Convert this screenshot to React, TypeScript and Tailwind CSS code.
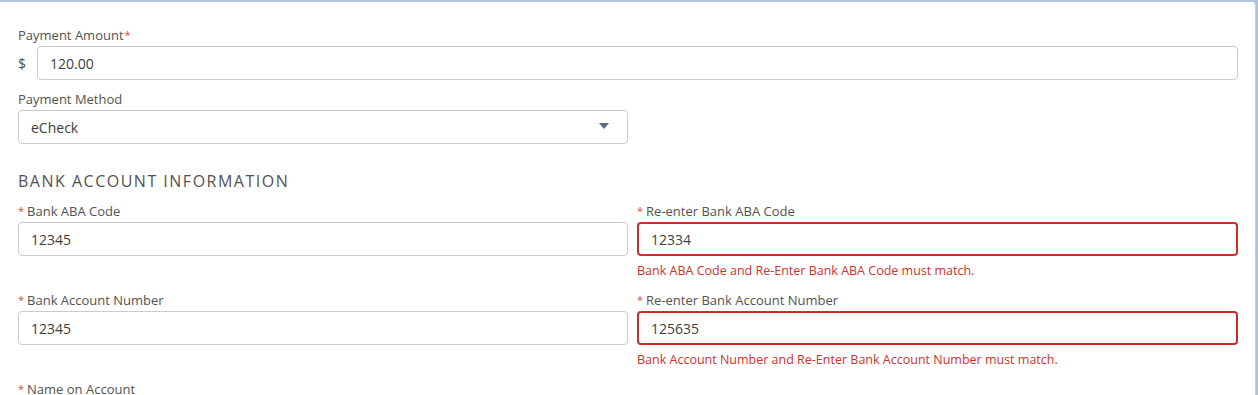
import { useState } from "react";

function Req() {
  return <abbr className="text-[#d14d48] no-underline mr-[3px] text-[11px] relative top-[-1px]" title="required">*</abbr>;
}

function Label({ text, required, after }: { text: string; required?: boolean; after?: boolean }) {
  return (
    <label className="block h-[18px] leading-[18px] pt-[1px] mb-[2px] box-content text-[13px] text-[#54524f]">
      {required && !after && <Req />}
      {text}
      {required && after && <span className="text-[#d14d48] ml-[1px] text-[11px] relative top-[-1px]">*</span>}
    </label>
  );
}

function TextInput({ value, error }: { value: string; error?: boolean }) {
  const [v, setV] = useState(value);
  return (
    <input
      value={v}
      onChange={(e) => setV(e.target.value)}
      className={
        "block w-full h-[34px] rounded-[4px] bg-white pl-[12px] pr-4 text-[14px] text-[#3e3e3c] outline-none " +
        (error ? "border-2 border-[#c9302b] pl-[11px]" : "border border-[#cbcbcb]")
      }
    />
  );
}

function Field({
  label,
  value,
  error,
}: {
  label: string;
  value: string;
  error?: string;
}) {
  return (
    <div>
      <Label text={label} required />
      <TextInput value={value} error={!!error} />
      {error && <div className="mt-[6px] h-[18px] leading-[18px] text-[12.5px] text-[#d0312d]">{error}</div>}
    </div>
  );
}

export default function App() {
  return (
    <div
      className="w-[1258px] h-[395px] overflow-hidden bg-[#b0c4df] pt-[2px]"
      style={{ fontFamily: '"Open Sans", "Noto Sans", sans-serif' }}
    >
      <div className="w-[1256px] h-[400px] bg-white border-r border-[#c9ced6] rounded-tr-[4px] pl-[18px] pr-[17px] pt-[23px]">
        {/* Payment amount */}
        <Label text="Payment Amount" required after />
        <div className="flex items-center">
          <span className="w-[19px] text-[14px] text-[#54524f]">$</span>
          <div className="flex-1">
            <TextInput value="120.00" />
          </div>
        </div>

        {/* Payment method */}
        <div className="mt-[9px] w-[610px]">
          <Label text="Payment Method" />
          <div className="relative">
            <select className="block w-full h-[34px] appearance-none rounded-[4px] border border-[#cbcbcb] bg-white pl-[12px] text-[14px] text-[#3e3e3c] outline-none">
              <option>eCheck</option>
              <option>Credit Card</option>
            </select>
            <svg
              className="pointer-events-none absolute right-[19px] top-[13px]"
              width="10"
              height="7"
              viewBox="0 0 10 7"
            >
              <path d="M0 0h10L5 6z" fill="#54698d" />
            </svg>
          </div>
        </div>

        {/* Bank account info */}
        <h2 className="mt-[25px] h-[24px] leading-[24px] text-[16px] uppercase tracking-[1.5px] text-[#54524f] font-normal">
          Bank Account Information
        </h2>
        <div className="mt-[8px] grid grid-cols-[610px_1fr] gap-x-[9px] gap-y-[10px]">
          <div>
            <Field label="Bank ABA Code" value="12345" />
          </div>
          <Field
            label="Re-enter Bank ABA Code"
            value="12334"
            error="Bank ABA Code and Re-Enter Bank ABA Code must match."
          />
          <div>
            <Field label="Bank Account Number" value="12345" />
          </div>
          <Field
            label="Re-enter Bank Account Number"
            value="125635"
            error="Bank Account Number and Re-Enter Bank Account Number must match."
          />
          <div>
            <Label text="Name on Account" required />
          </div>
        </div>
      </div>
    </div>
  );
}
